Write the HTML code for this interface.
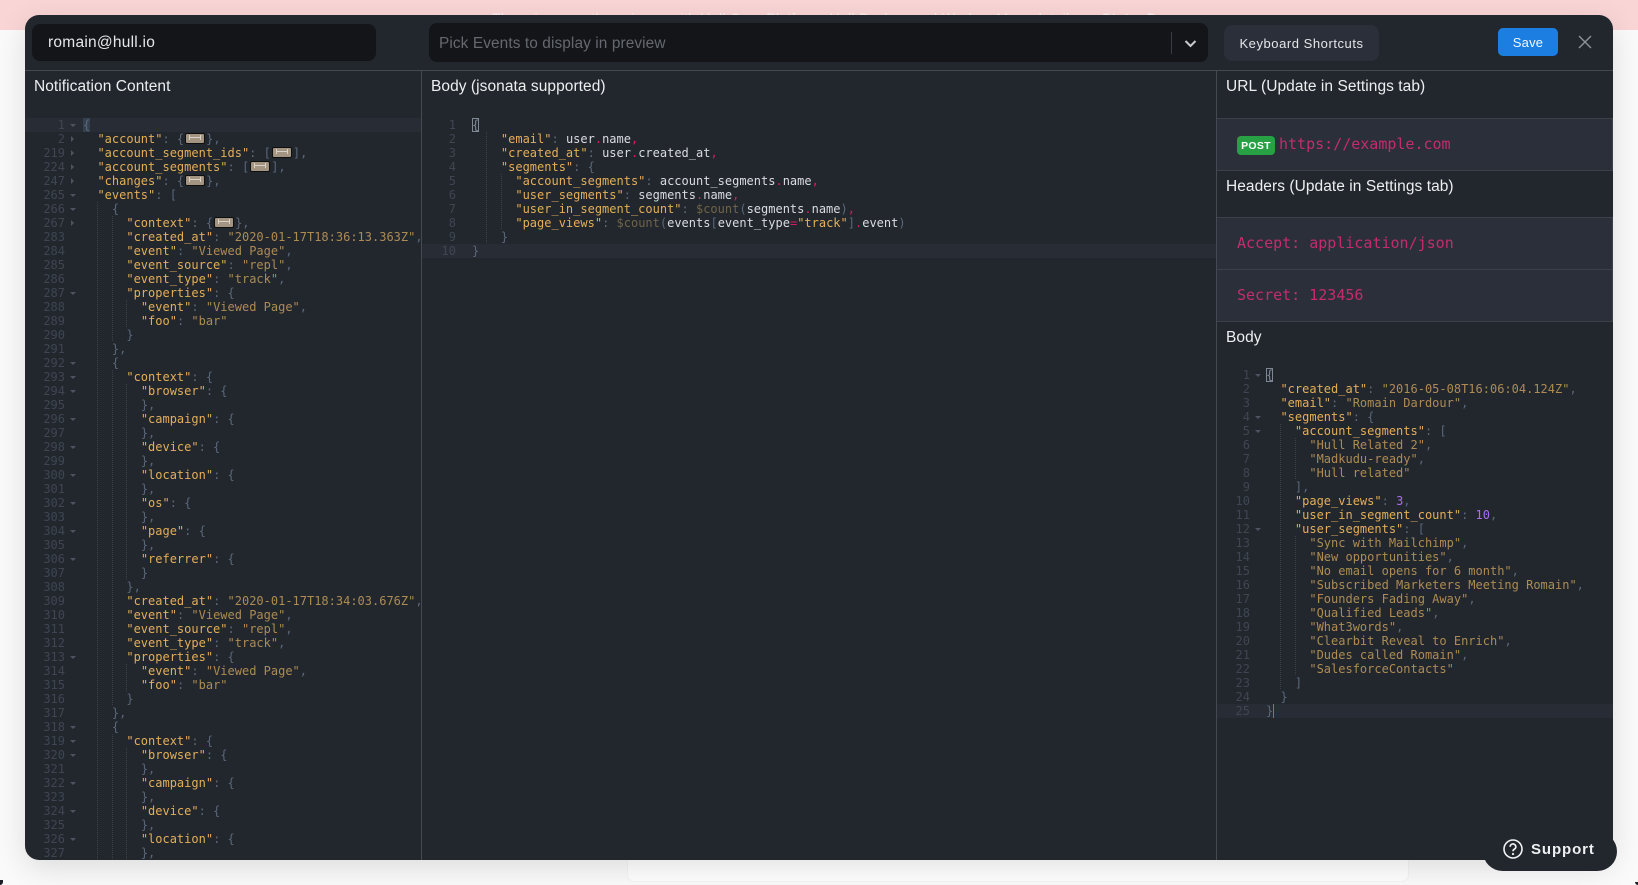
<!DOCTYPE html>
<html><head><meta charset="utf-8"><title>Preview</title>
<style>
*{box-sizing:border-box}
html,body{margin:0;padding:0;width:1638px;height:885px;overflow:hidden;background:#fafafa;font-family:"Liberation Sans",sans-serif}
.banner{position:absolute;left:0;top:0;width:1638px;height:30px;background:#f9d5d6;color:#fdf3f3;font-size:14px;text-align:center}
.banner span{position:absolute;left:492px;top:10px;width:650px;white-space:nowrap;text-align:left;letter-spacing:.35px}
.under{position:absolute;left:627px;top:800px;width:782px;height:82px;background:#fff;border:1px solid #f4f4f4;border-radius:8px}
.modal{position:absolute;left:25px;top:15px;width:1588px;height:845px;background:#22272e;border-radius:14px;overflow:hidden;box-shadow:0 8px 30px rgba(0,0,0,.12)}
.a{position:absolute}
.line{position:absolute;background:#444952}
.h{position:absolute;color:#eceef0;font-size:15.5px;white-space:nowrap;line-height:18px;letter-spacing:.06px}
.code{position:absolute;font:12px/14px "DejaVu Sans Mono",monospace;color:#d9dce1;overflow:hidden}
.code p{margin:0;height:14px;white-space:pre}
.code p.hl{background:#282d35}
em{font-style:normal;display:inline-block;height:14px;text-align:right;color:#3f4651;position:relative;vertical-align:top}
.c1 em{width:58px;padding-right:18px}
.c2 em{width:50px;padding-right:16px}
.c3 em{width:49px;padding-right:16px}
em.d:after{content:"";position:absolute;right:7px;top:6px;border:3px solid transparent;border-top:3.5px solid #4d545f;border-bottom:0}
em.r:after{content:"";position:absolute;right:9px;top:4px;border:3px solid transparent;border-left:3.5px solid #4d545f;border-right:0}
.c3 em.d:after{right:5px}
i{font-style:normal;color:#e3ae58}
b{font-weight:normal;color:#ad8b53}
s{text-decoration:none;color:#5a6778}
var{font-style:normal;color:#d81b66}
dfn{font-style:normal;color:#6f6448}
kbd{font:inherit;color:#a96cf0}
u{text-decoration:none;display:inline-block;height:14px;vertical-align:top;background:repeating-linear-gradient(#3b4049 0 1px,transparent 1px 2px) left top/1px 14px no-repeat}
tt{font:inherit;display:inline-block;width:20px;height:11px;margin:0 1px;border:1px solid #0f0f0f;border-radius:2px;background:#a49582;vertical-align:-1px;position:relative}
tt:after{content:"";position:absolute;left:3px;right:3px;top:3px;height:1px;background:#d9d2c6}
tt:before{content:"";position:absolute;left:3px;right:3px;top:1px;height:5px;border-left:1px solid #d9d2c6;border-right:1px solid #d9d2c6}
.box{outline:1px solid #7e8793;outline-offset:-1px;color:#7e8793}
.cur{display:inline-block;width:1px;height:14px;background:#5a7da8;vertical-align:top}
.rowx{position:absolute;left:1192px;width:396px;background:#2b2f39;border:1px solid #3c4049;border-left:0;border-right:1px solid #3c4049}
.pink{position:absolute;font:15px/18px "DejaVu Sans Mono",monospace;color:#c42c70;white-space:pre}
</style></head><body>
<div class="banner"><span>There is currently an issue with Hull Core Platform, Hull Background Worker. More details on <strong>StatusPage</strong></span></div>
<div class="under"></div>
<div class="modal">
<div class="a" style="left:7px;top:9px;width:344px;height:37px;background:#131518;border-radius:8px;color:#e4e6e8;font-size:15.5px;line-height:38px;padding-left:16px;letter-spacing:.25px">romain@hull.io</div>
<div class="a" style="left:404px;top:8px;width:779px;height:39px;background:#131518;border-radius:8px;color:#65696f;font-size:15.4px;line-height:41px;padding-left:10px;letter-spacing:.1px">Pick Events to display in preview</div>
<div class="a" style="left:1146px;top:17px;width:1px;height:22px;background:#3a3e44"></div>
<svg class="a" style="left:1159px;top:24px" width="13" height="9" viewBox="0 0 13 9"><path d="M1.5 2 L6.5 7 L11.5 2" fill="none" stroke="#c9cbce" stroke-width="2"/></svg>
<div class="a" style="left:1199px;top:10px;width:155px;height:36px;background:#2b2f39;border-radius:8px;color:#e4e6e8;font-size:13px;line-height:37px;text-align:center;letter-spacing:.55px">Keyboard Shortcuts</div>
<div class="a" style="left:1473px;top:13px;width:60px;height:28px;background:#1b7ee0;border-radius:5px;color:#f4f8fd;font-size:13px;line-height:30px;text-align:center;letter-spacing:.2px">Save</div>
<svg class="a" style="left:1552px;top:19px" width="16" height="16" viewBox="0 0 16 16"><path d="M2 2 L14 14 M14 2 L2 14" fill="none" stroke="#8d9198" stroke-width="1.4"/></svg>

<div class="line" style="left:0;top:55px;width:1588px;height:1px"></div>
<div class="line" style="left:396px;top:55px;width:1px;height:790px"></div>
<div class="line" style="left:1191px;top:55px;width:1px;height:790px"></div>

<div class="h" style="left:9px;top:63px">Notification Content</div>
<div class="h" style="left:406px;top:63px">Body (jsonata supported)</div>
<div class="h" style="left:1201px;top:63px">URL (Update in Settings tab)</div>
<div class="h" style="left:1201px;top:163px">Headers (Update in Settings tab)</div>
<div class="h" style="left:1201px;top:314px">Body</div>

<div class="rowx" style="top:103px;height:53px"></div>
<div class="rowx" style="top:202px;height:53px"></div>
<div class="rowx" style="top:254px;height:53px"></div>
<div class="a" style="left:1212px;top:121px;width:38px;height:19px;background:#28a144;border-radius:4px;color:#fff;font-size:10.5px;font-weight:bold;line-height:20px;text-align:center;letter-spacing:.3px">POST</div>
<div class="pink" style="left:1254px;top:120px">https://example.com</div>
<div class="pink" style="left:1212px;top:219px">Accept: application/json</div>
<div class="pink" style="left:1212px;top:271px">Secret: 123456</div>

<div class="code c1" style="left:0;top:103px;width:396px;height:742px">
<p class="hl"><em class="d">1</em><s style="background:#35404f">{</s></p>
<p><em class="r">2</em>  <i>"account"</i><s>: {</s><tt></tt><s>},</s></p>
<p><em class="r">219</em>  <i>"account_segment_ids"</i><s>: [</s><tt></tt><s>],</s></p>
<p><em class="r">224</em>  <i>"account_segments"</i><s>: [</s><tt></tt><s>],</s></p>
<p><em class="r">247</em>  <i>"changes"</i><s>: {</s><tt></tt><s>},</s></p>
<p><em class="d">265</em>  <i>"events"</i><s>: [</s></p>
<p><em class="d">266</em>  <u>  </u><s>{</s></p>
<p><em class="r">267</em>  <u>  </u><u>  </u><i>"context"</i><s>: {</s><tt></tt><s>},</s></p>
<p><em>283</em>  <u>  </u><u>  </u><i>"created_at"</i><s>: </s><b>"2020-01-17T18:36:13.363Z"</b><s>,</s></p>
<p><em>284</em>  <u>  </u><u>  </u><i>"event"</i><s>: </s><b>"Viewed Page"</b><s>,</s></p>
<p><em>285</em>  <u>  </u><u>  </u><i>"event_source"</i><s>: </s><b>"repl"</b><s>,</s></p>
<p><em>286</em>  <u>  </u><u>  </u><i>"event_type"</i><s>: </s><b>"track"</b><s>,</s></p>
<p><em class="d">287</em>  <u>  </u><u>  </u><i>"properties"</i><s>: {</s></p>
<p><em>288</em>  <u>  </u><u>  </u><u>  </u><i>"event"</i><s>: </s><b>"Viewed Page"</b><s>,</s></p>
<p><em>289</em>  <u>  </u><u>  </u><u>  </u><i>"foo"</i><s>: </s><b>"bar"</b></p>
<p><em>290</em>  <u>  </u><u>  </u><s>}</s></p>
<p><em>291</em>  <u>  </u><s>},</s></p>
<p><em class="d">292</em>  <u>  </u><s>{</s></p>
<p><em class="d">293</em>  <u>  </u><u>  </u><i>"context"</i><s>: {</s></p>
<p><em class="d">294</em>  <u>  </u><u>  </u><u>  </u><i>"browser"</i><s>: {</s></p>
<p><em>295</em>  <u>  </u><u>  </u><u>  </u><s>},</s></p>
<p><em class="d">296</em>  <u>  </u><u>  </u><u>  </u><i>"campaign"</i><s>: {</s></p>
<p><em>297</em>  <u>  </u><u>  </u><u>  </u><s>},</s></p>
<p><em class="d">298</em>  <u>  </u><u>  </u><u>  </u><i>"device"</i><s>: {</s></p>
<p><em>299</em>  <u>  </u><u>  </u><u>  </u><s>},</s></p>
<p><em class="d">300</em>  <u>  </u><u>  </u><u>  </u><i>"location"</i><s>: {</s></p>
<p><em>301</em>  <u>  </u><u>  </u><u>  </u><s>},</s></p>
<p><em class="d">302</em>  <u>  </u><u>  </u><u>  </u><i>"os"</i><s>: {</s></p>
<p><em>303</em>  <u>  </u><u>  </u><u>  </u><s>},</s></p>
<p><em class="d">304</em>  <u>  </u><u>  </u><u>  </u><i>"page"</i><s>: {</s></p>
<p><em>305</em>  <u>  </u><u>  </u><u>  </u><s>},</s></p>
<p><em class="d">306</em>  <u>  </u><u>  </u><u>  </u><i>"referrer"</i><s>: {</s></p>
<p><em>307</em>  <u>  </u><u>  </u><u>  </u><s>}</s></p>
<p><em>308</em>  <u>  </u><u>  </u><s>},</s></p>
<p><em>309</em>  <u>  </u><u>  </u><i>"created_at"</i><s>: </s><b>"2020-01-17T18:34:03.676Z"</b><s>,</s></p>
<p><em>310</em>  <u>  </u><u>  </u><i>"event"</i><s>: </s><b>"Viewed Page"</b><s>,</s></p>
<p><em>311</em>  <u>  </u><u>  </u><i>"event_source"</i><s>: </s><b>"repl"</b><s>,</s></p>
<p><em>312</em>  <u>  </u><u>  </u><i>"event_type"</i><s>: </s><b>"track"</b><s>,</s></p>
<p><em class="d">313</em>  <u>  </u><u>  </u><i>"properties"</i><s>: {</s></p>
<p><em>314</em>  <u>  </u><u>  </u><u>  </u><i>"event"</i><s>: </s><b>"Viewed Page"</b><s>,</s></p>
<p><em>315</em>  <u>  </u><u>  </u><u>  </u><i>"foo"</i><s>: </s><b>"bar"</b></p>
<p><em>316</em>  <u>  </u><u>  </u><s>}</s></p>
<p><em>317</em>  <u>  </u><s>},</s></p>
<p><em class="d">318</em>  <u>  </u><s>{</s></p>
<p><em class="d">319</em>  <u>  </u><u>  </u><i>"context"</i><s>: {</s></p>
<p><em class="d">320</em>  <u>  </u><u>  </u><u>  </u><i>"browser"</i><s>: {</s></p>
<p><em>321</em>  <u>  </u><u>  </u><u>  </u><s>},</s></p>
<p><em class="d">322</em>  <u>  </u><u>  </u><u>  </u><i>"campaign"</i><s>: {</s></p>
<p><em>323</em>  <u>  </u><u>  </u><u>  </u><s>},</s></p>
<p><em class="d">324</em>  <u>  </u><u>  </u><u>  </u><i>"device"</i><s>: {</s></p>
<p><em>325</em>  <u>  </u><u>  </u><u>  </u><s>},</s></p>
<p><em class="d">326</em>  <u>  </u><u>  </u><u>  </u><i>"location"</i><s>: {</s></p>
<p><em>327</em>  <u>  </u><u>  </u><u>  </u><s>},</s></p>
</div>

<div class="code c2" style="left:397px;top:103px;width:794px;height:200px">
<p><em>1</em><s class="box">{</s></p>
<p><em>2</em>  <u>  </u><i>"email"</i><s>: </s>user<var>.</var>name<var>,</var></p>
<p><em>3</em>  <u>  </u><i>"created_at"</i><s>: </s>user<var>.</var>created_at<var>,</var></p>
<p><em>4</em>  <u>  </u><i>"segments"</i><s>: {</s></p>
<p><em>5</em>  <u>  </u><u>  </u><i>"account_segments"</i><s>: </s>account_segments<var>.</var>name<var>,</var></p>
<p><em>6</em>  <u>  </u><u>  </u><i>"user_segments"</i><s>: </s>segments<var>.</var>name<var>,</var></p>
<p><em>7</em>  <u>  </u><u>  </u><i>"user_in_segment_count"</i><s>: </s><dfn>$count</dfn><s>(</s>segments<var>.</var>name<s>)</s><var>,</var></p>
<p><em>8</em>  <u>  </u><u>  </u><i>"page_views"</i><s>: </s><dfn>$count</dfn><s>(</s>events<s>[</s>event_type<var>=</var><i>"track"</i><s>]</s><var>.</var>event<s>)</s></p>
<p><em>9</em>  <u>  </u><s>}</s></p>
<p class="hl"><em>10</em><s>}</s></p>
</div>

<div class="code c3" style="left:1192px;top:353px;width:396px;height:400px">
<p><em class="d">1</em><s class="box">{</s></p>
<p><em>2</em>  <i>"created_at"</i><s>: </s><b>"2016-05-08T16:06:04.124Z"</b><s>,</s></p>
<p><em>3</em>  <i>"email"</i><s>: </s><b>"Romain Dardour"</b><s>,</s></p>
<p><em class="d">4</em>  <i>"segments"</i><s>: {</s></p>
<p><em class="d">5</em>  <u>  </u><i>"account_segments"</i><s>: [</s></p>
<p><em>6</em>  <u>  </u><u>  </u><b>"Hull Related 2"</b><s>,</s></p>
<p><em>7</em>  <u>  </u><u>  </u><b>"Madkudu-ready"</b><s>,</s></p>
<p><em>8</em>  <u>  </u><u>  </u><b>"Hull related"</b></p>
<p><em>9</em>  <u>  </u><s>],</s></p>
<p><em>10</em>  <u>  </u><i>"page_views"</i><s>: </s><kbd>3</kbd><s>,</s></p>
<p><em>11</em>  <u>  </u><i>"user_in_segment_count"</i><s>: </s><kbd>10</kbd><s>,</s></p>
<p><em class="d">12</em>  <u>  </u><i>"user_segments"</i><s>: [</s></p>
<p><em>13</em>  <u>  </u><u>  </u><b>"Sync with Mailchimp"</b><s>,</s></p>
<p><em>14</em>  <u>  </u><u>  </u><b>"New opportunities"</b><s>,</s></p>
<p><em>15</em>  <u>  </u><u>  </u><b>"No email opens for 6 month"</b><s>,</s></p>
<p><em>16</em>  <u>  </u><u>  </u><b>"Subscribed Marketers Meeting Romain"</b><s>,</s></p>
<p><em>17</em>  <u>  </u><u>  </u><b>"Founders Fading Away"</b><s>,</s></p>
<p><em>18</em>  <u>  </u><u>  </u><b>"Qualified Leads"</b><s>,</s></p>
<p><em>19</em>  <u>  </u><u>  </u><b>"What3words"</b><s>,</s></p>
<p><em>20</em>  <u>  </u><u>  </u><b>"Clearbit Reveal to Enrich"</b><s>,</s></p>
<p><em>21</em>  <u>  </u><u>  </u><b>"Dudes called Romain"</b><s>,</s></p>
<p><em>22</em>  <u>  </u><u>  </u><b>"SalesforceContacts"</b></p>
<p><em>23</em>  <u>  </u><s>]</s></p>
<p><em>24</em>  <s>}</s></p>
<p class="hl"><em>25</em><s>}</s><span class="cur"></span></p>
</div>
</div>

<div class="a" style="left:1483px;top:832px;width:134px;height:39px;background:#22272e;border-radius:0 20px 20px 20px;z-index:3"></div>
<svg class="a" style="left:1502px;top:838px;z-index:4" width="22" height="22" viewBox="0 0 22 22"><circle cx="11" cy="11" r="9" fill="none" stroke="#f1f2f3" stroke-width="1.6"/><path d="M8.2 8.8 A2.8 2.8 0 1 1 12.3 11.2 C11.3 11.8 11 12.3 11 13.3" fill="none" stroke="#f1f2f3" stroke-width="1.7"/><circle cx="11" cy="16" r="1.1" fill="#f1f2f3"/></svg>
<div class="a" style="left:1531px;top:840px;z-index:4;color:#eff0f1;font-size:15px;font-weight:bold;line-height:20px;letter-spacing:.9px">Support</div>
<div class="a" style="left:0;top:880px;width:3px;height:5px;background:#1a1e24;border-radius:0 0 3px 0"></div>
<div class="a" style="left:1635px;top:882px;width:3px;height:3px;background:#1a1e24;border-radius:0 0 0 3px"></div>
</body></html>
